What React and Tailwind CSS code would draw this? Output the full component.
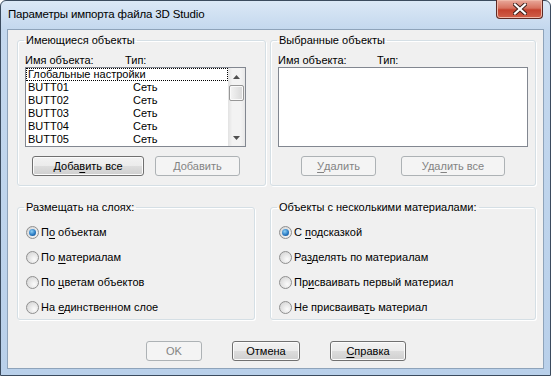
import React from 'react';

const items = ['BUTT01', 'BUTT02', 'BUTT03', 'BUTT04', 'BUTT05'];

function Ul({ children }) {
  return <span className="underline underline-offset-[2px]">{children}</span>;
}

function Button({ children, disabled, className = '' }) {
  const base = 'flex h-[20px] items-center justify-center rounded-[3px] border text-[11px] leading-[13px]';
  if (disabled) {
    return (
      <div className={`${base} border-[#adb2b5] bg-[#f4f4f4] text-[#838383] ${className}`}>
        {children}
      </div>
    );
  }
  return (
    <div
      className={`${base} border-[#707070] bg-[linear-gradient(to_bottom,#f2f2f2_0%,#ebebeb_50%,#dddddd_50%,#cfcfcf_100%)] text-black shadow-[inset_0_0_0_1px_#fbfbfb] ${className}`}
    >
      {children}
    </div>
  );
}

function Radio({ checked, children }) {
  return (
    <div className="flex h-[16px] items-center gap-[2px]">
      <span className="flex h-[13px] w-[13px] items-center justify-center rounded-full border border-[#8f8f8f] bg-[radial-gradient(circle_at_65%_65%,#fbfbfb,#dcdcdc_70%,#c9c9c9)]">
        {checked && (
          <span className="h-[7px] w-[7px] rounded-full bg-[radial-gradient(circle_at_40%_35%,#8fd0f5,#2b7cc4_55%,#0e3f78)]" />
        )}
      </span>
      <span className="text-[11px] leading-[13px]">{children}</span>
    </div>
  );
}

function Group({ title, className = '', children }) {
  return (
    <fieldset
      className={`rounded-[3px] border border-[#d5dfe5] shadow-[inset_1px_1px_0_#ffffff,1px_1px_0_#ffffff] ${className}`}
    >
      <legend className="ml-[6px] px-[2px] text-[11px] leading-[13px]">{title}</legend>
      {children}
    </fieldset>
  );
}

function ScrollBar() {
  return (
    <div className="flex w-[17px] flex-col bg-[linear-gradient(to_right,#e2e2e2,#f3f3f3_25%,#f3f3f3_75%,#e8e8e8)]">
      <div className="flex h-[17px] items-center justify-center">
        <svg width="7" height="4" viewBox="0 0 7 4">
          <path d="M3.5 0 L7 4 L0 4 Z" fill="#505050" />
        </svg>
      </div>
      <div className="mx-[1px] h-[16px] rounded-[2px] border border-[#979797] bg-[linear-gradient(to_right,#f4f4f4,#e6e6e6_50%,#d8d8d8)] shadow-[inset_0_0_0_1px_#fafafa]" />
      <div className="flex-1" />
      <div className="flex h-[17px] items-center justify-center">
        <svg width="7" height="4" viewBox="0 0 7 4">
          <path d="M0 0 L7 0 L3.5 4 Z" fill="#505050" />
        </svg>
      </div>
    </div>
  );
}

function CloseButton() {
  return (
    <div className="-mt-[1px] mr-[1px] flex h-[19px] w-[47px] items-center justify-center rounded-b-[4px] border border-t-0 border-[#5d2a24] bg-[linear-gradient(to_bottom,#e9a99b_0%,#d7725f_45%,#c4422e_55%,#d0604a_100%)] shadow-[inset_0_0_0_1px_#f0b8a8]">
      <svg width="14" height="12" viewBox="0 0 14 12">
        <path d="M2 1.5 L12 10.5 M12 1.5 L2 10.5" stroke="#3a1d18" strokeWidth="4" strokeLinecap="square" />
        <path d="M2 1.5 L12 10.5 M12 1.5 L2 10.5" stroke="#ffffff" strokeWidth="2.2" strokeLinecap="square" />
      </svg>
    </div>
  );
}

export default function App() {
  return (
    <div className="h-[376px] w-[551px] overflow-hidden font-['Liberation_Sans',Arial,sans-serif] text-black">
      <div className="flex h-full w-full flex-col rounded-t-[6px] border border-[#3b4b5e] bg-[linear-gradient(to_bottom,#dbe8f6_0px,#c4d8ee_28px,#b9d0ea_100%)] px-[6px] pb-[6px]">
        {/* title bar */}
        <div className="flex h-[28px] items-start justify-between">
          <div className="pl-[1px] pt-[5px] text-[11.5px] leading-[16px] tracking-[-0.15px]">
            Параметры импорта файла 3D Studio
          </div>
          <CloseButton />
        </div>

        {/* client area */}
        <div className="flex flex-1 flex-col border border-[#8ea3ba] bg-[#f0f0f0]">
          <div className="flex pl-[9px] pt-[4px]">
            <Group title="Имеющиеся объекты" className="h-[152px] w-[249px]">
              <div className="mt-[7px] flex pl-[7px] text-[11px] leading-[13px]">
                <span className="w-[100px]">Имя объекта:</span>
                <span>Тип:</span>
              </div>
              <div className="ml-[7px] flex h-[80px] w-[221px] border border-[#828790] bg-white">
                <div className="flex-1 text-[11px] leading-[13px]">
                  <div className="h-[13px] pl-[1px] outline outline-1 -outline-offset-1 outline-dotted outline-black">
                    <span className="pl-[1px]">Глобальные настройки</span>
                  </div>
                  {items.map((name) => (
                    <div key={name} className="flex h-[13px] pl-[2px]">
                      <span className="w-[105px]">{name}</span>
                      <span>Сеть</span>
                    </div>
                  ))}
                </div>
                <ScrollBar />
              </div>
              <div className="mt-[9px] flex gap-[11px] pl-[14px]">
                <Button className="w-[112px]">
                  Доба<Ul>в</Ul>ить все
                </Button>
                <Button disabled className="w-[85px]">
                  <Ul>Д</Ul>обавить
                </Button>
              </div>
            </Group>

            <Group title="Выбранные объекты" className="ml-[4px] h-[152px] w-[266px]">
              <div className="mt-[7px] flex pl-[7px] text-[11px] leading-[13px]">
                <span className="w-[99px]">Имя объекта:</span>
                <span>Тип:</span>
              </div>
              <div className="ml-[7px] h-[80px] w-[250px] border border-[#828790] bg-white" />
              <div className="mt-[9px] flex gap-[25px] pl-[30px]">
                <Button disabled className="w-[75px]">
                  <Ul>У</Ul>далить
                </Button>
                <Button disabled className="w-[104px]">
                  Уда<Ul>л</Ul>ить все
                </Button>
              </div>
            </Group>
          </div>

          <div className="mt-[15px] flex pl-[9px]">
            <Group title="Размещать на слоях:" className="h-[119px] w-[238px]">
              <div className="flex flex-col gap-[9px] pl-[8px] pt-[10px]">
                <Radio checked>
                  П<Ul>о</Ul> объектам
                </Radio>
                <Radio>
                  По <Ul>м</Ul>атериалам
                </Radio>
                <Radio>
                  По <Ul>ц</Ul>ветам объектов
                </Radio>
                <Radio>
                  На <Ul>е</Ul>динственном слое
                </Radio>
              </div>
            </Group>

            <Group title="Объекты с несколькими материалами:" className="ml-[15px] h-[119px] w-[266px]">
              <div className="flex flex-col gap-[9px] pl-[8px] pt-[10px]">
                <Radio checked>
                  С <Ul>п</Ul>одсказкой
                </Radio>
                <Radio>
                  Ра<Ul>з</Ul>делять по материалам
                </Radio>
                <Radio>
                  Пр<Ul>и</Ul>сваивать первый материал
                </Radio>
                <Radio>
                  Не присваива<Ul>т</Ul>ь материал
                </Radio>
              </div>
            </Group>
          </div>

          <div className="mt-[21px] flex gap-[30px] pl-[138px]">
            <Button disabled className="w-[56px]">
              OK
            </Button>
            <Button className="w-[68px]">Отмена</Button>
            <Button className="w-[76px]">
              <Ul>С</Ul>правка
            </Button>
          </div>
        </div>
      </div>
    </div>
  );
}
